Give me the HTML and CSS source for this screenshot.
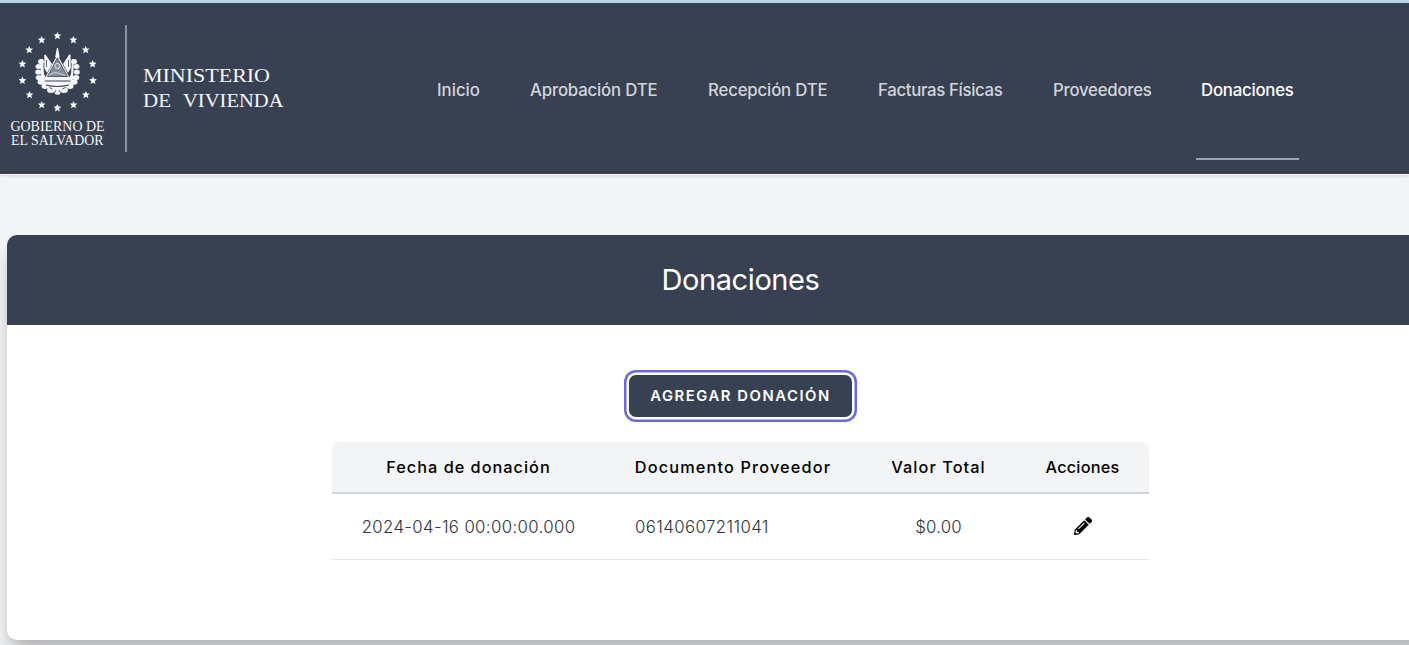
FILE: index.html
```html
<!DOCTYPE html>
<html lang="es">
<head>
<meta charset="utf-8">
<title>Donaciones</title>
<link rel="stylesheet" href="styles.css">
</head>
<body>
<header class="navbar">
  <svg class="brand" width="300" height="171" viewBox="0 3 300 171" role="img" aria-label="Ministerio de Vivienda">
    <defs><path id="star" d="M0-3.900L1.100-1.400 3.800-1.200 1.700.7 2.500 3.400 0 2-2.500 3.400-1.700.7-3.800-1.200-1.100-1.400z"/></defs>
    <g fill="#fff">
      <use href="#star" x="57.4" y="35.8"/><use href="#star" x="73.4" y="40"/><use href="#star" x="85.7" y="49.8"/>
      <use href="#star" x="92.7" y="64"/><use href="#star" x="93" y="80.5"/><use href="#star" x="85.9" y="94.8"/>
      <use href="#star" x="73.5" y="104.8"/><use href="#star" x="57.4" y="108"/><use href="#star" x="41.7" y="104.8"/>
      <use href="#star" x="29.5" y="94.8"/><use href="#star" x="22.4" y="80.5"/><use href="#star" x="22.4" y="64"/>
      <use href="#star" x="29.2" y="49.8"/><use href="#star" x="41.7" y="40"/>
    </g>
    <!-- coat of arms: flags, laurel, triangle, ribbon -->
    <g fill="#f4f6f8">
      <path d="M44.300 55l1.200-.5 6.500 9.500-5 9-2.700-5zM70.500 54.500l-1.300 0L63 64l5 9 2.800-5z"/>
      <path d="M56.900 48h1.100l1.700 9h-4.500z"/>
      <ellipse cx="41" cy="61.500" rx="3" ry="2.600"/><ellipse cx="74" cy="61.500" rx="3" ry="2.600"/>
      <ellipse cx="38.500" cy="66.500" rx="3" ry="2.500"/><ellipse cx="76.500" cy="66.500" rx="3" ry="2.500"/>
      <ellipse cx="38.200" cy="72" rx="3" ry="2.600"/><ellipse cx="76.800" cy="72" rx="3" ry="2.600"/>
      <ellipse cx="39" cy="77.500" rx="3.300" ry="2.600"/><ellipse cx="76" cy="77.500" rx="3.300" ry="2.600"/>
      <ellipse cx="41" cy="82" rx="3.500" ry="2.700"/><ellipse cx="74" cy="82" rx="3.500" ry="2.700"/>
      <ellipse cx="45" cy="86" rx="3.500" ry="3"/><ellipse cx="70" cy="86" rx="3.500" ry="3"/>
      <ellipse cx="51" cy="90" rx="4" ry="3"/><ellipse cx="64" cy="90" rx="4" ry="3"/>
      <ellipse cx="57.500" cy="92" rx="3.500" ry="2.800"/>
      <path d="M40 59l3 0 1 15 3 6h21l3-6 1-15 2 0-1 20-6 8-8 4h-4l-8-4-6-8z"/>
      <path d="M57.400 54.500L70.800 80H44z"/>
    </g>
    <g fill="none" stroke="#384152">
      <path d="M57.400 58L67.500 76.500h-20z" fill="#858e9c" stroke-width=".8"/>
      <path d="M44.800 81h25.500M46 85q11.500 3 23 0" stroke-width="1.200"/>
      <path d="M46.500 60v7M68.500 60v7M49.500 87.500l3 1.500M65.500 87.500l-3 1.500M54 94l2-4M61 94l-2-4" stroke-width=".8"/>
      <path d="M48.500 75.500l6-3 5 1 6 2" stroke="#dfe3e8" stroke-width=".8"/>
      <circle cx="57.400" cy="66" r="2.600" stroke="#e5e8ec"/>
    </g>
    <path d="M126 25v127" stroke="#9ba2ad" stroke-width="1.700"/>
    <g class="brand-text">
      <text x="10.500" y="131" font-size="14.500" textLength="94" lengthAdjust="spacingAndGlyphs">GOBIERNO DE</text>
      <text x="11" y="145" font-size="15" textLength="92.500" lengthAdjust="spacingAndGlyphs">EL SALVADOR</text>
      <text x="143" y="82" font-size="19.500" textLength="127" lengthAdjust="spacingAndGlyphs">MINISTERIO</text>
      <text x="143" y="107.300" font-size="19.500" textLength="28" lengthAdjust="spacingAndGlyphs">DE</text>
      <text x="183" y="107.300" font-size="19.500" textLength="100.500" lengthAdjust="spacingAndGlyphs">VIVIENDA</text>
    </g>
  </svg>
  <nav class="menu">
    <a class="link inicio">Inicio</a>
    <a class="link aprobacion">Aprobación DTE</a>
    <a class="link recepcion">Recepción DTE</a>
    <a class="link facturas">Facturas Físicas</a>
    <a class="link proveedores">Proveedores</a>
    <a class="link donaciones active">Donaciones</a>
  </nav>
</header>
<main class="card">
  <h1 class="card-title"><span>Donaciones</span></h1>
  <div class="card-body">
    <button class="add-button">AGREGAR DONACIÓN</button>
    <div class="table">
      <div class="row head">
        <div class="cell"><span class="h-fecha">Fecha de donación</span></div>
        <div class="cell"><span class="h-doc">Documento Proveedor</span></div>
        <div class="cell"><span class="h-valor">Valor Total</span></div>
        <div class="cell"><span class="h-acc">Acciones</span></div>
      </div>
      <div class="row data">
        <div class="cell"><span class="d-fecha">2024-04-16 00:00:00.000</span></div>
        <div class="cell left"><span class="d-doc">06140607211041</span></div>
        <div class="cell"><span class="d-valor">$0.00</span></div>
        <div class="cell"><svg class="pencil" width="18" height="18" viewBox="0 0 512 512"><path d="M497.900 142.100l-46.100 46.100c-4.700 4.700-12.300 4.700-17 0l-111-111c-4.700-4.700-4.700-12.300 0-17l46.100-46.100c18.700-18.700 49.100-18.700 67.900 0l60.100 60.100c18.800 18.700 18.800 49.100 0 67.900zM284.200 99.800L21.600 362.400.4 483.900c-2.900 16.400 11.400 30.600 27.800 27.800l121.500-21.300 262.600-262.600c4.700-4.700 4.700-12.300 0-17l-111-111c-4.800-4.700-12.400-4.700-17.100 0zM124.100 339.900c-5.500-5.500-5.500-14.300 0-19.800l154-154c5.500-5.500 14.300-5.500 19.800 0s5.500 14.300 0 19.800l-154 154c-5.500 5.500-14.300 5.500-19.800 0zM88 424h48v36.300l-64.500 11.300-31.100-31.100L51.700 376H88v48z"/></svg></div>
      </div>
    </div>
  </div>
</main>
</body>
</html>
```
FILE: styles.css
```css
* { box-sizing: border-box; }
body {
  margin: 0;
  height: 645px;
  overflow: hidden;
  background: #f2f4f6;
  border-top: 3px solid #bcd3ee;
  font-family: Inter, "Liberation Sans", sans-serif;
}
.navbar {
  display: flex;
  height: 172px;
  background: #384152;
  border-bottom: 1px solid #f8f9fa;
  box-shadow: 0 1px 3px rgba(0, 0, 0, .15);
}
.brand { display: block; flex: none; }
.brand-text { fill: #f4f6f8; font-family: "Liberation Serif", serif; }
.menu { display: flex; gap: 40px; height: 157px; padding-left: 132px; }
.link {
  flex: none;
  padding: 0 5px;
  line-height: 175px;
  font-size: 16.8px;
  font-weight: 500;
  color: #d1d5db;
  white-space: nowrap;
  border-bottom: 2px solid transparent;
}
.inicio { width: 53px; }
.aprobacion { width: 138px; letter-spacing: -.18px; }
.recepcion { width: 130px; letter-spacing: -.17px; }
.facturas { width: 135px; letter-spacing: -.33px; }
.proveedores { width: 108px; letter-spacing: -.25px; }
.donaciones { width: 103px; letter-spacing: -.23px; }
.active { color: #fff; border-bottom-color: #9ca3af; }
.card {
  width: 1467px;
  height: 405px;
  margin: 60px 0 0 7px;
  overflow: hidden;
  background: #fff;
  border-radius: 10px;
  box-shadow: 0 20px 25px -5px rgba(0, 0, 0, .16), 0 8px 14px -3px rgba(0, 0, 0, .16);
}
.card-title {
  height: 90px;
  margin: 0;
  background: #384152;
  color: #fff;
  font-size: 29px;
  font-weight: 400;
  letter-spacing: -.4px;
  line-height: 90px;
  text-align: center;
}
.card-body {
  display: flex;
  flex-direction: column;
  align-items: center;
  gap: 25px;
  padding-top: 50px;
}
.add-button {
  width: 223px;
  height: 42px;
  padding: 0;
  border: 0;
  border-radius: 7px;
  background: #384152;
  box-shadow: 0 0 0 2.500px #fff, 0 0 0 5px #6769dc;
  color: #fff;
  font: 600 14.800px Inter, sans-serif;
  letter-spacing: 1.550px;
  white-space: nowrap;
}
.table { width: 817px; }
.row { display: grid; grid-template-columns: 273px 256px 155px 133px; }
.head {
  height: 52px;
  background: #f2f4f6;
  border-bottom: 2px solid #d1d5db;
  border-radius: 8px 8px 0 0;
  font-size: 16.300px;
  font-weight: 500;
  letter-spacing: 1px;
}
.data {
  height: 66px;
  border-bottom: 1px solid #e3e5e8;
  color: #2b3342;
  font-size: 16.800px;
  font-weight: 300;
}
.cell { display: flex; align-items: center; justify-content: center; white-space: nowrap; }
.cell.left { justify-content: flex-start; padding-left: 30px; }
.pencil { fill: #000; margin-bottom: 2px; }
.h-doc { letter-spacing: 1.150px; }
.h-valor { letter-spacing: 1.080px; }
.h-acc { letter-spacing: .85px; }
.h-acc { letter-spacing: .2px; }
.d-fecha { letter-spacing: .36px; }
.d-doc { letter-spacing: .4px; }
.d-valor { letter-spacing: .2px; }
```
